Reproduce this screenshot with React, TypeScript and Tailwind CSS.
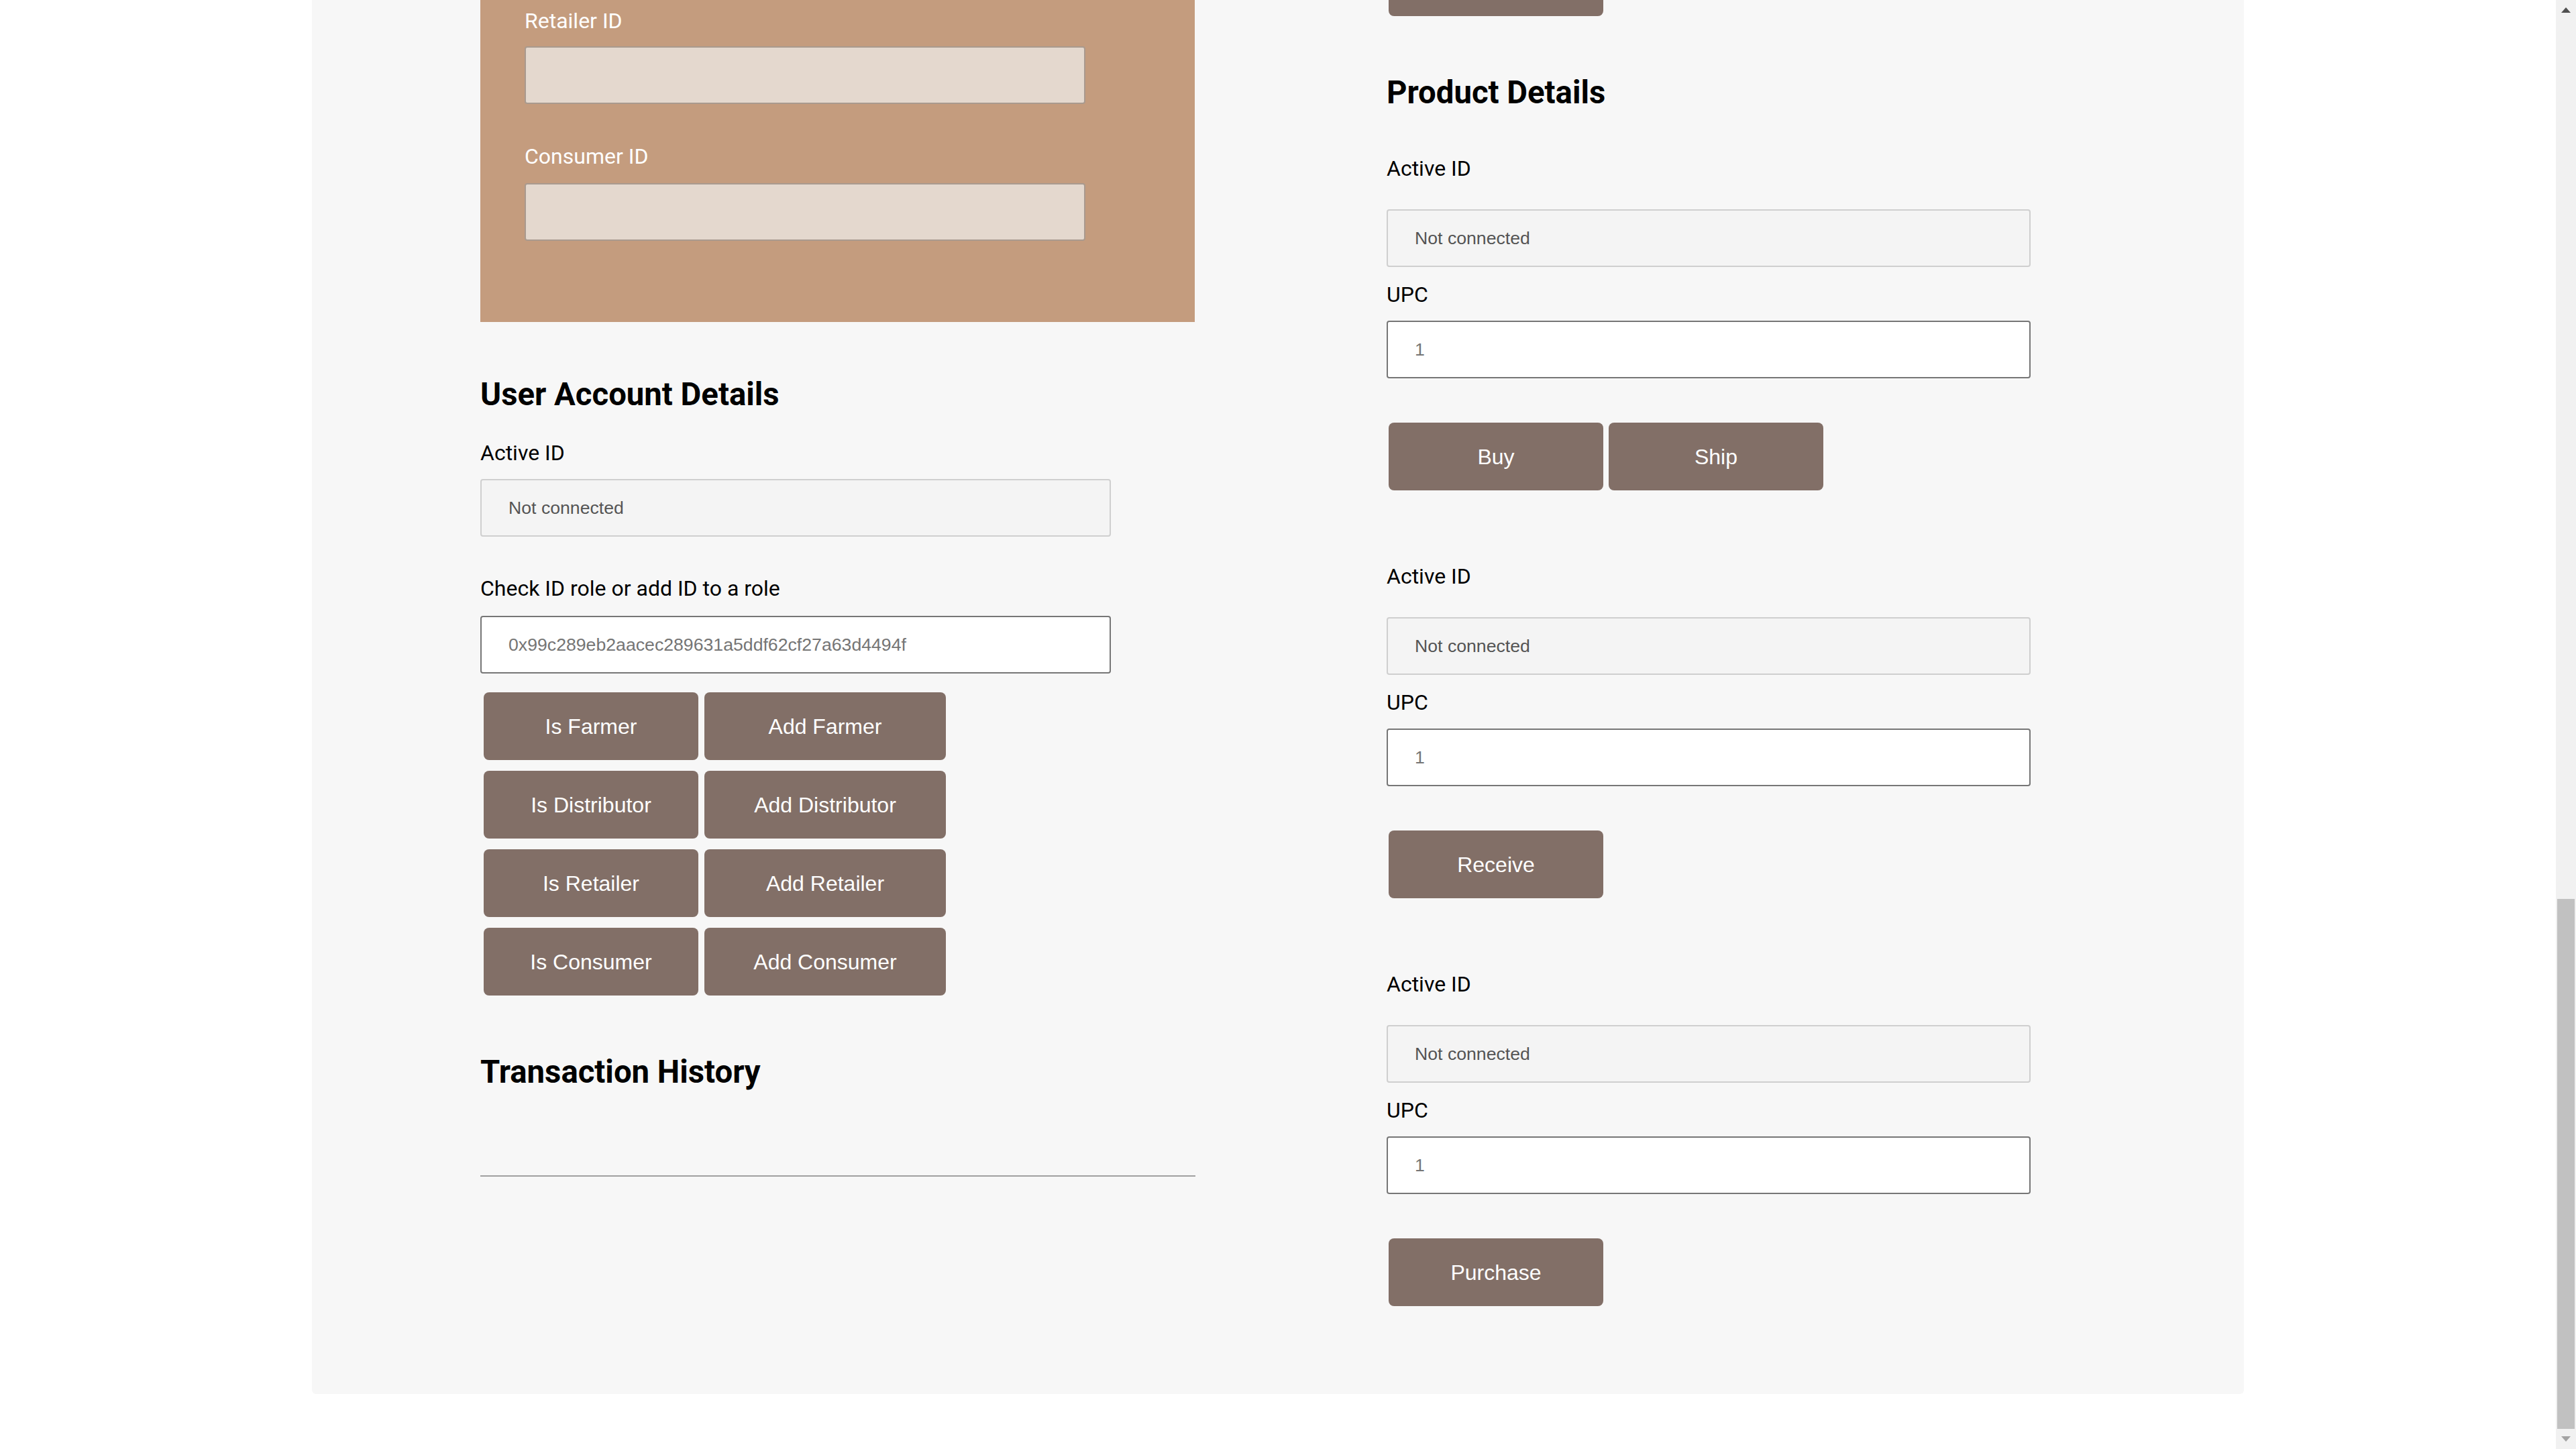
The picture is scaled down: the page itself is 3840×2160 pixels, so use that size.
import React from 'react';

const labelFont = "font-['Roboto',sans-serif]";
const fieldFont = "font-['Liberation_Sans',Arial,sans-serif]";

const Label = ({ children, className = '' }: { children: React.ReactNode; className?: string }) => (
    <label className={`block ${labelFont} text-[32px] leading-[38px] text-black ${className}`}>{children}</label>
);

const Heading = ({ children, className = '' }: { children: React.ReactNode; className?: string }) => (
    <h2 className={`${labelFont} font-bold text-[47.3px] leading-[56px] text-black ${className}`}>{children}</h2>
);

// readonly "Not connected" field
const IdField = ({ className = '' }: { className?: string }) => (
    <input
        readOnly
        value="Not connected"
        className={`block h-[86px] rounded-[4px] border-2 border-[#cfcfcf] bg-[#f4f4f4] pl-[40px] ${fieldFont} text-[26.67px] text-[#545454] outline-none ${className}`}
    />
);

const TextField = ({ value, className = '' }: { value: string; className?: string }) => (
    <input
        readOnly
        value={value}
        className={`block h-[86px] rounded-[4px] border-2 border-[#767676] bg-white pl-[40px] ${fieldFont} text-[26.67px] text-[#757575] outline-none ${className}`}
    />
);

const Btn = ({ children, className = '' }: { children?: React.ReactNode; className?: string }) => (
    <button className={`h-[101px] rounded-[8px] bg-[#826f67] ${fieldFont} text-[32px] text-white ${className}`}>
        {children}
    </button>
);

const roles = ['Farmer', 'Distributor', 'Retailer', 'Consumer'];

const UpcSection = ({ actions, first = false }: { actions: string[]; first?: boolean }) => (
    <>
        <Label className={first ? 'mt-[66px]' : 'mt-[109px]'}>Active ID</Label>
        <IdField className="mt-[42px] w-[960px]" />
        <Label className="mt-[22px]">UPC</Label>
        <TextField value="1" className="mt-[20px] w-[960px]" />
        <div className="mt-[66px] ml-[3px] flex gap-[8px]">
            {actions.map((a) => (
                <Btn key={a} className="w-[320px]">{a}</Btn>
            ))}
        </div>
    </>
);

const App = () => {
    return (
        <div className="flex h-[2160px] w-full overflow-hidden bg-white">
            <main className="flex-1">
                <div className="mx-auto flex w-[2880px] items-start rounded-b-[6px] bg-[#f7f7f7] pl-[251px]">
                    {/* left column */}
                    <div className="flex w-[1065px] flex-col">
                        <div className="bg-[#c49c7e] pl-[66px] pt-[12px] pb-[121px]">
                            <Label className="text-white">Retailer ID</Label>
                            <input className="mt-[19px] block h-[86px] w-[836px] rounded-[4px] border-2 border-[#a99a8e] bg-[#e4d8ce] outline-none" />
                            <Label className="mt-[59px] text-white">Consumer ID</Label>
                            <input className="mt-[21px] block h-[86px] w-[836px] rounded-[4px] border-2 border-[#a99a8e] bg-[#e4d8ce] outline-none" />
                        </div>

                        <Heading className="mt-[80px]">User Account Details</Heading>
                        <Label className="mt-[40px]">Active ID</Label>
                        <IdField className="mt-[20px] w-[940px]" />
                        <Label className="mt-[58px]">Check ID role or add ID to a role</Label>
                        <TextField value="0x99c289eb2aacec289631a5ddf62cf27a63d4494f" className="mt-[22px] w-[940px]" />

                        <div className="mt-[28px] ml-[5px] flex flex-col gap-[16px]">
                            {roles.map((r) => (
                                <div key={r} className="flex gap-[9px]">
                                    <Btn className="w-[320px]">Is {r}</Btn>
                                    <Btn className="w-[360px]">Add {r}</Btn>
                                </div>
                            ))}
                        </div>

                        <Heading className="mt-[86px]">Transaction History</Heading>
                        <hr className="mt-[126px] w-[1066px] border-t-2 border-[#a0a0a0]" />
                    </div>

                    {/* right column */}
                    <div className="ml-[286px] flex flex-col pb-[131px]">
                        {/* button scrolled out of view above */}
                        <Btn className="-mt-[77px] ml-[3px] w-[320px]" />
                        <Heading className="mt-[86px]">Product Details</Heading>
                        <UpcSection first actions={['Buy', 'Ship']} />
                        <UpcSection actions={['Receive']} />
                        <UpcSection actions={['Purchase']} />
                    </div>
                </div>
            </main>

            {/* scrollbar */}
            <div className="flex w-[30px] flex-col bg-[#f1f1f1]">
                <div className="flex h-[30px] items-center justify-center">
                    <svg width="14" height="8" viewBox="0 0 14 8"><path d="M0 8 L7 0 L14 8 Z" fill="#505050" /></svg>
                </div>
                <div className="flex-1" />
                <div className="mx-[2px] h-[790px] bg-[#c1c1c1]" />
                <div className="flex h-[30px] items-center justify-center">
                    <svg width="14" height="8" viewBox="0 0 14 8"><path d="M0 0 L14 0 L7 8 Z" fill="#a3a3a3" /></svg>
                </div>
            </div>
        </div>
    );
};

export default App;
